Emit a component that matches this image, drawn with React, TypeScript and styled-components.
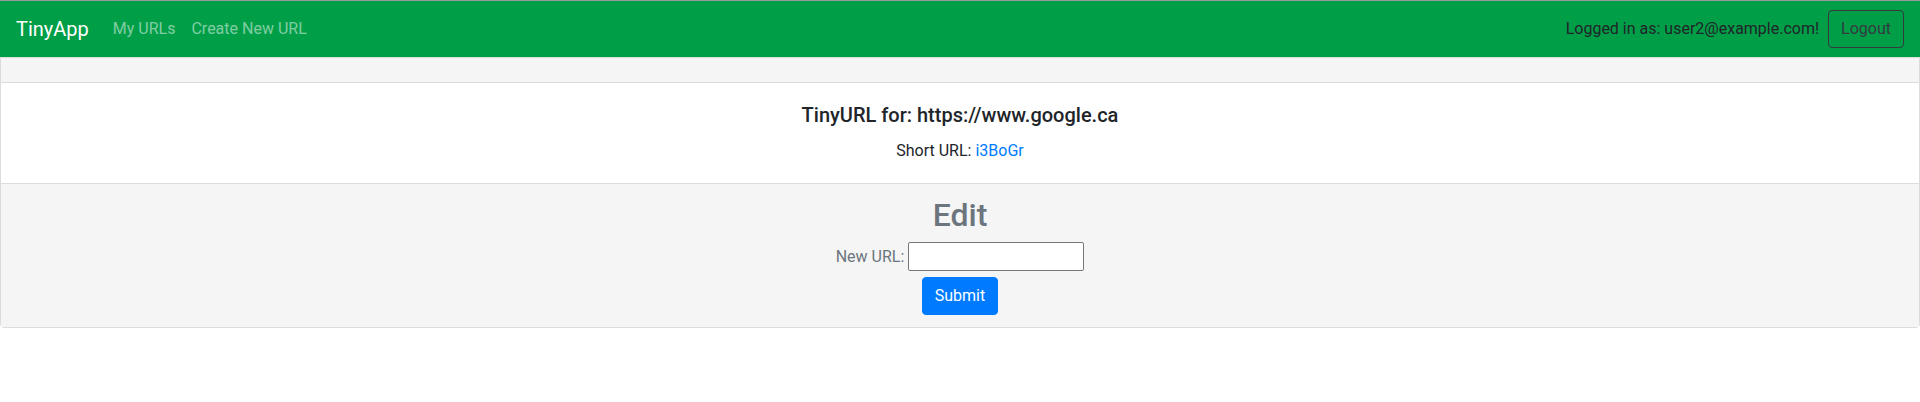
import React from "react";
import styled, { createGlobalStyle } from "styled-components";

const GlobalStyle = createGlobalStyle`
  * { box-sizing: border-box; }
  body {
    margin: 0;
    font-family: Roboto, "Liberation Sans", sans-serif;
    font-size: 16px;
    line-height: 1.5;
    color: #212529;
    background: #fff;
  }
`;

const Navbar = styled.nav`
  display: flex;
  align-items: center;
  justify-content: space-between;
  height: 57px;
  padding: 0 16px;
  background: #009e47;
  border-top: 1px solid #9a9a9a;
`;

const NavLeft = styled.div`
  display: flex;
  align-items: center;
`;

const Brand = styled.a`
  font-size: 20px;
  line-height: 30px;
  color: #fff;
  text-decoration: none;
  margin-right: 16px;
`;

const NavLink = styled.a`
  padding: 8px;
  color: rgba(255, 255, 255, 0.5);
  text-decoration: none;
`;

const NavRight = styled.div`
  display: flex;
  align-items: center;
  gap: 9px;
`;

const LoginText = styled.span`
  color: #212529;
`;

const OutlineButton = styled.button`
  font-family: inherit;
  font-size: 16px;
  line-height: 24px;
  padding: 6px 12px;
  background: transparent;
  color: #343a40;
  border: 1px solid #343a40;
  border-radius: 4px;
`;

const Card = styled.div`
  border: 1px solid #dcdcdc;
  border-radius: 0 0 4px 4px;
  text-align: center;
`;

const CardHeader = styled.div`
  height: 25px;
  background: #f5f5f5;
  border-bottom: 1px solid #dcdcdc;
`;

const CardBody = styled.div`
  padding: 20px;
  background: #fff;
`;

const CardTitle = styled.h5`
  margin: 0 0 12px;
  font-size: 20px;
  font-weight: 500;
  line-height: 24px;
`;

const CardText = styled.p`
  margin: 0;
`;

const ShortLink = styled.a`
  color: #007bff;
  text-decoration: none;
`;

const CardFooter = styled.div`
  padding: 12px 20px;
  background: #f5f5f5;
  border-top: 1px solid #dcdcdc;
  color: #6c757d;
  display: flex;
  flex-direction: column;
  align-items: center;
`;

const EditTitle = styled.h2`
  margin: 0 0 8px;
  font-size: 32px;
  font-weight: 500;
  line-height: 38px;
`;

const FormRow = styled.div`
  display: flex;
  align-items: center;
  gap: 4px;
  height: 29px;
  margin-bottom: 6px;
`;

const Input = styled.input`
  width: 176px;
  height: 29px;
  border: 1px solid #767676;
  border-radius: 2px;
  background: #fff;
  font-family: inherit;
  font-size: 14px;
  padding: 2px 4px;
`;

const PrimaryButton = styled.button`
  font-family: inherit;
  font-size: 16px;
  line-height: 24px;
  padding: 6px 12px;
  background: #007bff;
  color: #fff;
  border: 1px solid #007bff;
  border-radius: 4px;
`;

export default function App() {
  return (
    <>
      <GlobalStyle />
      <Navbar>
        <NavLeft>
          <Brand href="#">TinyApp</Brand>
          <NavLink href="#">My URLs</NavLink>
          <NavLink href="#">Create New URL</NavLink>
        </NavLeft>
        <NavRight>
          <LoginText>Logged in as: user2@example.com!</LoginText>
          <OutlineButton>Logout</OutlineButton>
        </NavRight>
      </Navbar>
      <Card>
        <CardHeader />
        <CardBody>
          <CardTitle>TinyURL for: https://www.google.ca</CardTitle>
          <CardText>
            Short URL: <ShortLink href="#">i3BoGr</ShortLink>
          </CardText>
        </CardBody>
        <CardFooter>
          <EditTitle>Edit</EditTitle>
          <form onSubmit={(e) => e.preventDefault()} style={{ display: "contents" }}>
            <FormRow>
              <label htmlFor="newurl">New URL:</label>
              <Input id="newurl" type="text" />
            </FormRow>
            <PrimaryButton type="submit">Submit</PrimaryButton>
          </form>
        </CardFooter>
      </Card>
    </>
  );
}
